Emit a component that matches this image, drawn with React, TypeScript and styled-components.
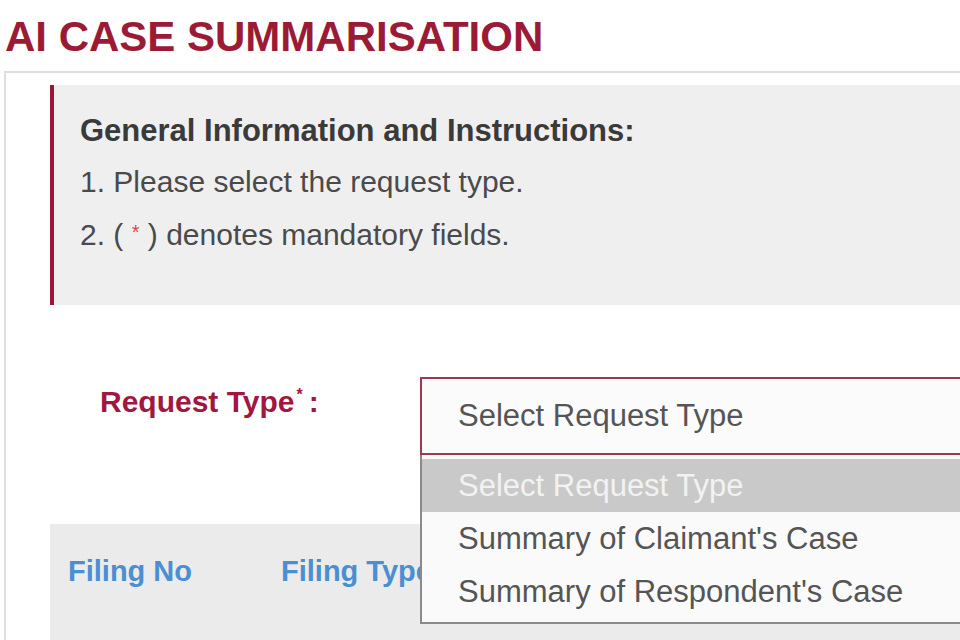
import styled, { createGlobalStyle } from "styled-components";

const GlobalStyle = createGlobalStyle`
  body {
    margin: 0;
    overflow: hidden;
    background: #ffffff;
    font-family: "Liberation Sans", Arial, sans-serif;
  }
`;

const Page = styled.div`
  width: 1200px;
  padding: 12px 0 0 4px;
`;

const Title = styled.h1`
  margin: 0 0 9px 1px;
  font-size: 42px;
  line-height: 50px;
  font-weight: bold;
  color: #9b1b36;
`;

const Panel = styled.div`
  border-top: 2px solid #dedede;
  border-left: 2px solid #dedede;
  padding: 12px 0 0 44px;
`;

const InfoBox = styled.div`
  height: 220px;
  box-sizing: border-box;
  background: #f0eff0;
  border-left: 4px solid #9c1538;
  padding: 20px 0 0 26px;
  color: #4a4a4a;
`;

const InfoHeading = styled.div`
  font-size: 31px;
  line-height: 52px;
  font-weight: bold;
  color: #3a3a3a;
`;

const InfoLine = styled.div`
  font-size: 30px;
  line-height: 50px;
`;

const Star = styled.span`
  color: #e04848;
  font-size: 20px;
  vertical-align: 6px;
`;

const FormRow = styled.div`
  display: flex;
  margin-top: 72px;
`;

const Label = styled.label`
  width: 370px;
  padding-left: 50px;
  box-sizing: border-box;
  font-size: 30px;
  line-height: 36px;
  font-weight: bold;
  color: #a0173f;
`;

const LabelStar = styled.span`
  font-size: 16px;
  vertical-align: 12px;
  margin: 0 6px 0 2px;
`;

const SelectWrap = styled.div`
  position: relative;
  flex: 1;
`;

const SelectBox = styled.div`
  height: 78px;
  box-sizing: border-box;
  border: 2px solid #9c3a54;
  background: #fbfbfb;
  padding-left: 36px;
  display: flex;
  align-items: center;
  font-size: 31px;
  color: #555555;
`;

const Dropdown = styled.div`
  position: absolute;
  top: 100%;
  left: 0;
  right: 0;
  z-index: 2;
  background: #fafafa;
  border: 2px solid #8a8a8a;
  border-top: none;
  padding: 4px 0 4px;
`;

const Option = styled.div<{ $active?: boolean }>`
  height: 53px;
  display: flex;
  align-items: center;
  padding-left: 36px;
  font-size: 31px;
  background: ${(p) => (p.$active ? "#c9c9c9" : "transparent")};
  color: ${(p) => (p.$active ? "#f2f2f2" : "#555555")};
`;

const TableHead = styled.div`
  margin-top: 69px;
  height: 200px;
  background: #ebebeb;
  display: flex;
  padding: 27px 0 0 18px;
`;

const HeadCell = styled.div<{ $w: number }>`
  width: ${(p) => p.$w}px;
  font-size: 29px;
  line-height: 40px;
  font-weight: bold;
  color: #4a8fd2;
`;

const options = [
  "Select Request Type",
  "Summary of Claimant's Case",
  "Summary of Respondent's Case",
];

export default function App() {
  return (
    <Page>
      <GlobalStyle />
      <Title>AI CASE SUMMARISATION</Title>
      <Panel>
        <InfoBox>
          <InfoHeading>General Information and Instructions:</InfoHeading>
          <InfoLine>1. Please select the request type.</InfoLine>
          <InfoLine>
            2. ( <Star>*</Star> ) denotes mandatory fields.
          </InfoLine>
        </InfoBox>
        <FormRow>
          <Label>
            Request Type<LabelStar>*</LabelStar>:
          </Label>
          <SelectWrap>
            <SelectBox>Select Request Type</SelectBox>
            <Dropdown>
              {options.map((o, i) => (
                <Option key={o} $active={i === 0}>
                  {o}
                </Option>
              ))}
            </Dropdown>
          </SelectWrap>
        </FormRow>
        <TableHead>
          <HeadCell $w={213}>Filing No</HeadCell>
          <HeadCell $w={300}>Filing Type</HeadCell>
        </TableHead>
      </Panel>
    </Page>
  );
}
